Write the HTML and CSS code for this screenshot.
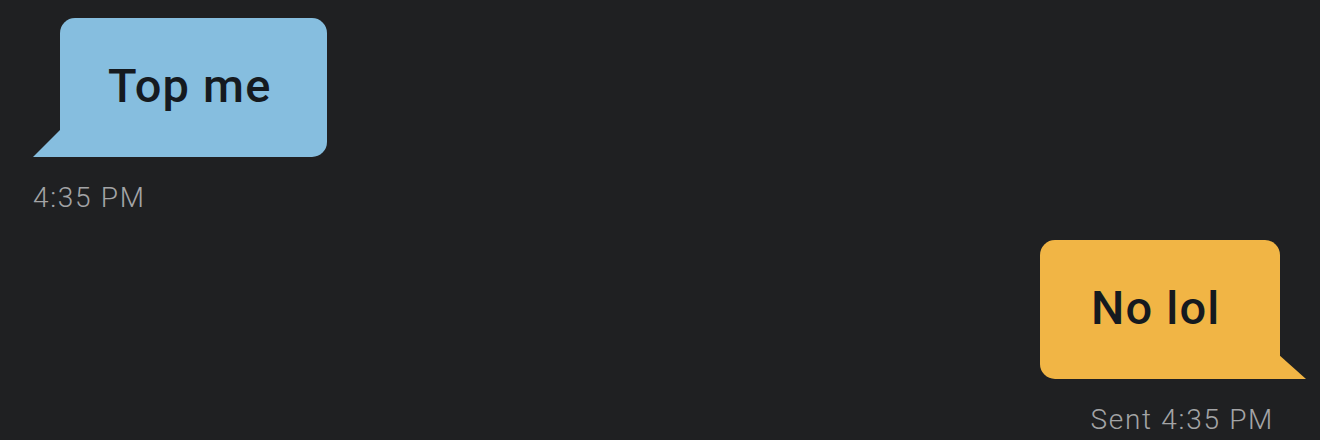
FILE: index.html
```html
<!DOCTYPE html>
<html lang="en">
<head>
    <meta charset="UTF-8">
    <meta name="viewport" content="width=device-width, initial-scale=1.0">
    <title>Chat</title>
    <link rel="stylesheet" href="styles.css">
</head>
<body>
    <div class="chat">
        <div class="message received">
            <div class="bubble">Top me</div>
            <div class="time">4:35 PM</div>
        </div>

        <div class="message sent">
            <div class="bubble">No lol</div>
            <div class="time">Sent 4:35 PM</div>
        </div>
    </div>
</body>
</html>
```

FILE: styles.css
```css
body {
    margin: 0;
    padding: 0;
    background-color: #1f2022;
    font-family: Roboto, "Liberation Sans", sans-serif;
}
.chat {
    display: flex;
    flex-direction: column;
    padding: 18px 14px 0 33px;
}
.message {
    display: flex;
    flex-direction: column;
}
.message.received {
    align-items: flex-start;
}
.message.sent {
    align-items: flex-end;
    margin-top: 26px;
}
.bubble {
    position: relative;
    box-sizing: border-box;
    height: 139px;
    display: flex;
    align-items: center;
    font-size: 47px;
    font-weight: 500;
    letter-spacing: 1.2px;
    color: #151a1f;
    border-radius: 15px;
    padding-bottom: 4px;
}
.received .bubble {
    width: 267px;
    margin-left: 27px;
    padding-left: 48px;
    background-color: #86bedf;
    border-bottom-left-radius: 0;
}
.sent .bubble {
    width: 240px;
    margin-right: 26px;
    padding-left: 51px;
    background-color: #f1b545;
    border-bottom-right-radius: 0;
}
/* bubble tails */
.bubble::before {
    content: "";
    position: absolute;
    bottom: 0;
    width: 28px;
    height: 28px;
}
.received .bubble::before {
    left: -27px;
    background-color: #86bedf;
    clip-path: polygon(100% 0, 100% 100%, 0 100%);
}
.sent .bubble::before {
    right: -26px;
    height: 25px;
    background-color: #f1b545;
    clip-path: polygon(0 0, 100% 100%, 0 100%);
}
.time {
    margin-top: 24px;
    font-size: 28px;
    font-weight: 300;
    color: #a3a4a6;
    letter-spacing: 1.7px;
}
.sent .time {
    margin-right: 32px;
}
```
